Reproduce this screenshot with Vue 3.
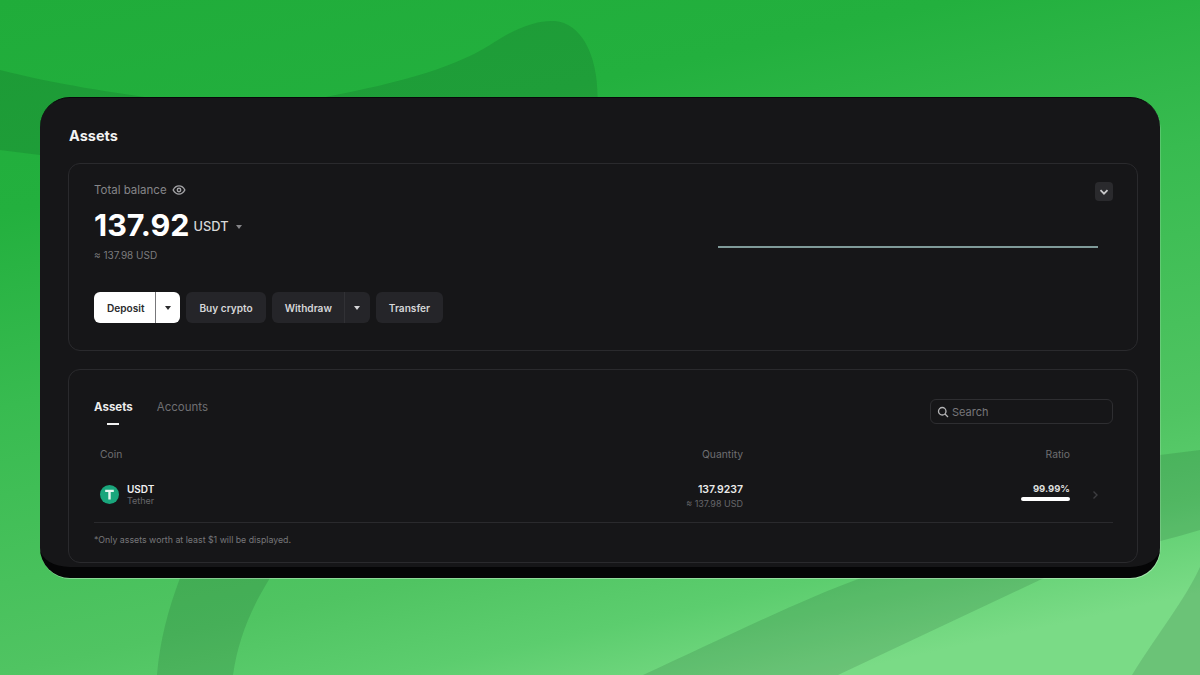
<template>
  <div class="page">
    <svg class="backdrop" viewBox="0 0 1200 675" preserveAspectRatio="none">
      <defs>
        <linearGradient id="bg" gradientUnits="userSpaceOnUse" x1="0" y1="0" x2="187" y2="844">
          <stop offset="0" stop-color="#20ac3a" />
          <stop offset="0.24" stop-color="#23b03e" />
          <stop offset="0.46" stop-color="#38bb50" />
          <stop offset="0.76" stop-color="#50c462" />
          <stop offset="0.86" stop-color="#5ccd6e" />
          <stop offset="0.97" stop-color="#7adb86" />
        </linearGradient>
      </defs>
      <rect width="1200" height="675" fill="url(#bg)" />
      <path class="shade" d="M0 70C60 85 110 92 165 100L310 100C390 85 450 70 490 45C520 25 540 20 555 21C585 24 605 65 595 130V200H100V160L40 155L0 150Z" />
      <path class="shade" d="M157 675C160 640 168 610 180 578V560H270V578C250 610 238 640 233 675Z" />
      <path class="shade" d="M643 675C720 640 800 600 861 578L1160 455L1200 450V530C1150 545 1100 555 1044 578L838 675Z" />
      <path class="shade" d="M1132 675C1160 630 1185 600 1200 567V675Z" />
    </svg>
    <main class="window">
      <h1 class="page-title">Assets</h1>
      <section class="card balance-card">
        <div class="balance-left">
          <div class="balance-label">
            <span>Total balance</span>
            <svg width="14" height="14" viewBox="0 0 24 24" fill="none" stroke="#a3a3a6" stroke-width="2.4">
              <path d="M2 12s3.6-7 10-7 10 7 10 7-3.6 7-10 7-10-7-10-7Z" />
              <circle cx="12" cy="12" r="3" />
            </svg>
          </div>
          <div class="balance-amount">
            <span class="amount">137.92</span>
            <span class="unit">USDT</span>
            <span class="caret caret--grey" />
          </div>
          <div class="balance-usd">≈ 137.98 USD</div>
          <div class="actions">
            <div class="btn-split btn-split--light">
              <span class="btn-main">Deposit</span>
              <span class="btn-drop"><span class="caret" /></span>
            </div>
            <div class="btn">Buy crypto</div>
            <div class="btn-split">
              <span class="btn-main">Withdraw</span>
              <span class="btn-drop"><span class="caret" /></span>
            </div>
            <div class="btn">Transfer</div>
          </div>
        </div>
        <div class="balance-right">
          <div class="collapse">
            <svg width="10" height="10" viewBox="0 0 10 10" fill="none" stroke="#c9c9cb" stroke-width="1.8">
              <path d="M1.5 3.2 5 6.7l3.5-3.5" />
            </svg>
          </div>
          <div class="chart-line" />
        </div>
      </section>

      <section class="card assets-card">
        <div class="assets-top">
          <div class="tabs">
            <div class="tab tab--active">Assets</div>
            <div class="tab">Accounts</div>
          </div>
          <div class="search">
            <svg width="12" height="12" viewBox="0 0 24 24" fill="none" stroke="#b5b5b7" stroke-width="2.6">
              <circle cx="10.5" cy="10.5" r="7.5" />
              <path d="m16 16 6 6" />
            </svg>
            <span>Search</span>
          </div>
        </div>
        <div class="table-head">
          <span class="col-coin">Coin</span>
          <span class="col-qty">Quantity</span>
          <span class="col-ratio">Ratio</span>
        </div>
        <div class="table-row">
          <div class="col-coin coin">
            <svg class="coin-icon" width="19" height="19" viewBox="0 0 19 19">
              <circle cx="9.5" cy="9.5" r="9.5" fill="#1aa67c" />
              <path d="M5.2 4.8h8.6v2.1h-3.1v7.6H8.3V6.9H5.2Z" fill="#e6f7f0" />
            </svg>
            <div>
              <div class="coin-name">USDT</div>
              <div class="coin-sub">Tether</div>
            </div>
          </div>
          <div class="col-qty qty-cell">
            <div class="qty">137.9237</div>
            <div class="qty-sub">≈ 137.98 USD</div>
          </div>
          <div class="col-ratio ratio-cell">
            <div class="ratio">99.99%</div>
            <div class="ratio-bar" />
          </div>
          <svg class="row-arrow" width="8" height="10" viewBox="0 0 8 10" fill="none" stroke="#3d3d40" stroke-width="1.4">
            <path d="m2.5 1.5 3.5 3.5-3.5 3.5" />
          </svg>
        </div>
        <div class="footnote">*Only assets worth at least $1 will be displayed.</div>
      </section>
    </main>
  </div>
</template>

<script setup>
</script>

<style>
body {
  background: #3cbf55;
}
</style>

<style scoped>
.page {
  position: relative;
  width: 1200px;
  height: 675px;
  overflow: hidden;
  padding: 97px 40px 0;
  box-sizing: border-box;
  font-family: Inter, "Liberation Sans", sans-serif;
}

.backdrop {
  position: absolute;
  inset: 0;
  width: 1200px;
  height: 675px;
}

.shade {
  fill: rgba(10, 40, 20, 0.13);
}

.window {
  position: relative;
  height: 481px;
  box-sizing: border-box;
  padding: 29px 22px 0 28px;
  background: #161618;
  border-radius: 30px;
  border-top: 1px solid #08080a;
  border-bottom: 11px solid #050506;
  box-shadow: 0.5px 1px 0 rgba(255, 255, 255, 0.35);
  overflow: hidden;
}

.page-title {
  margin: 0 0 18px 1px;
  font-size: 14.5px;
  line-height: 18px;
  font-weight: 700;
  color: #f2f2f2;
}

.card {
  border: 1px solid #2a2a2d;
  border-radius: 12px;
  box-sizing: border-box;
}

.balance-card {
  display: flex;
  justify-content: space-between;
  height: 188px;
  padding: 17px 24px 0 25px;
}

.balance-label {
  display: flex;
  align-items: center;
  gap: 5px;
  font-size: 11.5px;
  line-height: 18px;
  color: #858588;
}

.balance-amount {
  display: flex;
  align-items: center;
  margin-top: 8px;
  height: 34px;
}

.amount {
  font-size: 30.5px;
  font-weight: 700;
  color: #fff;
}

.unit {
  margin-left: 4px;
  margin-top: 5px;
  font-size: 12.8px;
  font-weight: 500;
  color: #d8d8d8;
}

.caret {
  display: block;
  width: 0;
  height: 0;
  border-left: 3px solid transparent;
  border-right: 3px solid transparent;
  border-top: 4px solid currentColor;
}

.caret--grey {
  margin: 5px 0 0 7px;
  color: #858588;
}

.balance-usd {
  margin-top: 7px;
  font-size: 10px;
  line-height: 14px;
  color: #7c7c7f;
}

.actions {
  display: flex;
  gap: 6px;
  margin-top: 30px;
}

.btn,
.btn-split {
  display: flex;
  align-items: center;
  height: 31px;
  border-radius: 6px;
  background: #252529;
  color: #d6d6d8;
  font-size: 10.1px;
  font-weight: 600;
}

.btn {
  padding: 0 13px;
}

.btn-main {
  padding: 0 12px 0 13px;
}

.btn-drop {
  display: flex;
  align-items: center;
  justify-content: center;
  width: 26px;
  height: 100%;
  border-left: 1px solid #313135;
  box-sizing: border-box;
}

.btn-split--light {
  background: #fff;
  color: #2a2a2c;
}

.btn-split--light .btn-main {
  padding-right: 11px;
}

.btn-split--light .btn-drop {
  width: 25px;
  border-left-color: #77777a;
}

.balance-right {
  display: flex;
  flex-direction: column;
  align-items: flex-end;
}

.collapse {
  display: flex;
  align-items: center;
  justify-content: center;
  width: 18px;
  height: 19px;
  margin-top: 1px;
  margin-bottom: 45px;
  border-radius: 4px;
  background: #2a2a2d;
}

.chart-line {
  width: 380px;
  height: 2px;
  margin-right: 15px;
  background: #7f9a99;
}

.assets-card {
  height: 194px;
  margin-top: 18px;
  padding: 0 24px 0 25px;
}

.assets-top {
  display: flex;
  justify-content: space-between;
  align-items: flex-start;
  height: 76px;
  padding-top: 29px;
  box-sizing: border-box;
}

.tabs {
  display: flex;
  gap: 24px;
}

.tab {
  position: relative;
  font-size: 11.5px;
  line-height: 16px;
  color: #6f6f72;
}

.tab--active {
  font-weight: 700;
  color: #ededed;
}

.tab--active::after {
  content: "";
  position: absolute;
  left: 13px;
  top: 24px;
  width: 12px;
  height: 2px;
  background: #f2f2f2;
}

.search {
  display: flex;
  align-items: center;
  gap: 3px;
  width: 183px;
  height: 25px;
  padding-left: 6px;
  box-sizing: border-box;
  border: 1px solid #2e2e31;
  border-radius: 6px;
  font-size: 11px;
  color: #77777a;
}

.table-head,
.table-row {
  display: flex;
  align-items: center;
  padding: 0 43px 0 6px;
}

.table-head {
  height: 16px;
  font-size: 10.3px;
  color: #6f6f72;
}

.col-coin {
  flex: 1;
}

.col-qty {
  width: 200px;
  text-align: right;
}

.col-ratio {
  width: 327px;
  text-align: right;
}

.table-row {
  position: relative;
  height: 61px;
  padding-top: 5px;
  box-sizing: border-box;
  border-bottom: 1px solid #2a2a2d;
}

.coin {
  display: flex;
  align-items: center;
  gap: 8px;
}

.coin-name {
  font-size: 10px;
  line-height: 12px;
  font-weight: 600;
  color: #f0f0f0;
}

.coin-sub {
  font-size: 9px;
  line-height: 12px;
  color: #66666a;
}

.qty-cell {
  padding-top: 3px;
}

.qty {
  font-size: 10.5px;
  line-height: 15px;
  font-weight: 600;
  color: #eaeaea;
}

.qty-sub {
  font-size: 9px;
  line-height: 14px;
  color: #66666a;
}

.ratio-cell {
  padding-bottom: 5.5px;
}

.ratio {
  font-size: 9.5px;
  line-height: 13px;
  font-weight: 700;
  color: #dedede;
}

.ratio-bar {
  width: 49px;
  height: 4px;
  margin: 2px 0 0 auto;
  border-radius: 2px;
  background: #fff;
}

.row-arrow {
  position: absolute;
  right: 14px;
  top: 28px;
}

.footnote {
  margin-top: 11px;
  font-size: 8.8px;
  line-height: 12px;
  color: #77777a;
}
</style>
